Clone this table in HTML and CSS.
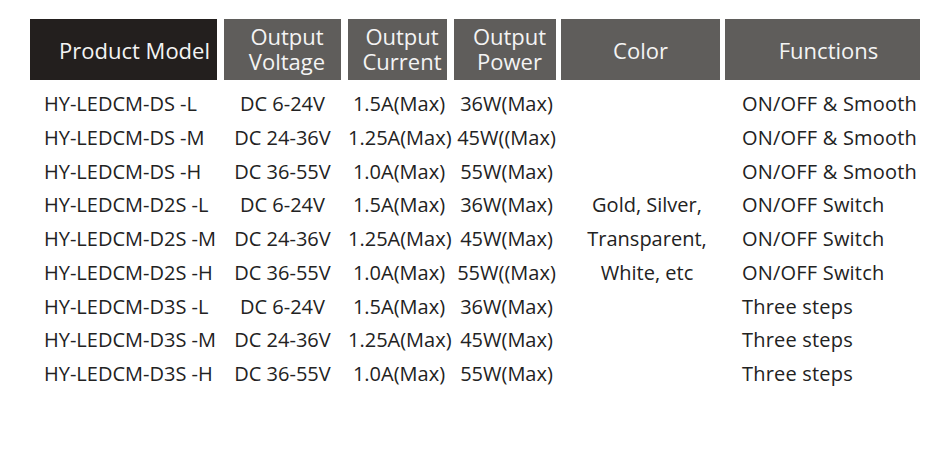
FILE: index.html
```html
<!DOCTYPE html>
<html>
<head>
<meta charset="utf-8">
<link rel="stylesheet" href="styles.css">
</head>
<body>
<div class="table">
  <div class="head dark model">Product Model</div>
  <div class="head g2 volt">Output<br>Voltage</div>
  <div class="head g2 cur">Output<br>Current</div>
  <div class="head g2 pow">Output<br>Power</div>
  <div class="head g1 col">Color</div>
  <div class="head g1 fun">Functions</div>

  <div class="body model">
    <div>HY-LEDCM-DS -L</div><div>HY-LEDCM-DS -M</div><div>HY-LEDCM-DS -H</div>
    <div>HY-LEDCM-D2S -L</div><div>HY-LEDCM-D2S -M</div><div>HY-LEDCM-D2S -H</div>
    <div>HY-LEDCM-D3S -L</div><div>HY-LEDCM-D3S -M</div><div>HY-LEDCM-D3S -H</div>
  </div>
  <div class="body volt">
    <div>DC 6-24V</div><div>DC 24-36V</div><div>DC 36-55V</div>
    <div>DC 6-24V</div><div>DC 24-36V</div><div>DC 36-55V</div>
    <div>DC 6-24V</div><div>DC 24-36V</div><div>DC 36-55V</div>
  </div>
  <div class="body cur">
    <div>1.5A(Max)</div><div>1.25A(Max)</div><div>1.0A(Max)</div>
    <div>1.5A(Max)</div><div>1.25A(Max)</div><div>1.0A(Max)</div>
    <div>1.5A(Max)</div><div>1.25A(Max)</div><div>1.0A(Max)</div>
  </div>
  <div class="body pow">
    <div>36W(Max)</div><div>45W((Max)</div><div>55W(Max)</div>
    <div>36W(Max)</div><div>45W(Max)</div><div>55W((Max)</div>
    <div>36W(Max)</div><div>45W(Max)</div><div>55W(Max)</div>
  </div>
  <div class="body col">
    <div>Gold, Silver,</div><div>Transparent,</div><div>White, etc</div>
  </div>
  <div class="body fun">
    <div>ON/OFF &amp; Smooth</div><div>ON/OFF &amp; Smooth</div><div>ON/OFF &amp; Smooth</div>
    <div>ON/OFF Switch</div><div>ON/OFF Switch</div><div>ON/OFF Switch</div>
    <div>Three steps</div><div>Three steps</div><div>Three steps</div>
  </div>
</div>
</body>
</html>
```
FILE: styles.css
```css
html, body {
  margin: 0;
  padding: 0;
  background: #ffffff;
}
body {
  font-family: "Open Sans", "Noto Sans", sans-serif;
  color: #222;
}
.table {
  display: grid;
  grid-template-columns: 194px 124px 106px 107px 164px 195px;
  padding: 19px 0 0 30px;
}
.head {
  height: 61px;
  color: #f4f4f4;
  font-size: 22px;
  display: flex;
  align-items: center;
  justify-content: center;
  text-align: center;
  box-sizing: border-box;
}
.g2 {
  line-height: 25px;
  padding-left: 9px;
  padding-bottom: 1px;
}
.dark {
  background: #231f1e;
  justify-content: flex-end;
  padding-right: 7px;
  margin-right: 7px;
}
.g2, .g1 { background: #5f5d5b; }
.volt.head, .cur.head { margin-right: 7px; }
.pow.head, .col.head { margin-right: 5px; }
.fun.head { margin-right: 0; padding-left: 12px; }

.body {
  padding-top: 7px;
  font-size: 20px;
  line-height: 33.75px;
  white-space: nowrap;
}
.body.model { padding-left: 14px; }
.body.volt { text-align: center; margin-right: 7px; }
.body.cur { text-align: center; margin-right: 4px; }
.body.pow { text-align: center; margin-right: 2px; }
.body.col {
  text-align: center;
  padding-top: 108px;
  padding-left: 8px;
}
.body.fun { padding-left: 17px; letter-spacing: 0.2px; }
```
